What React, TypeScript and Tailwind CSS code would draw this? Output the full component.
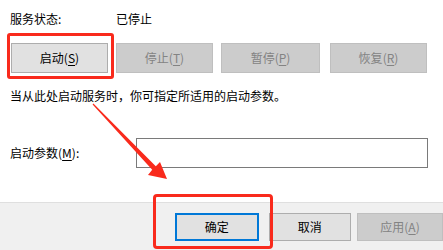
const font = { fontFamily: '"Noto Sans CJK SC", "Microsoft YaHei", sans-serif' };

function Key({ label, k }: { label: string; k: string }) {
  return (
    <>
      {label}(<span className="underline underline-offset-2">{k}</span>)
    </>
  );
}

function TopButton({ children, disabled, className = "" }: { children: React.ReactNode; disabled?: boolean; className?: string }) {
  return (
    <div
      className={
        "flex h-[30px] w-[97px] items-center justify-center border text-[12px] leading-4 " +
        (disabled ? "border-[#bfbfbf] bg-[#cccccc] text-[#838383] " : "border-[#adadad] bg-[#e1e1e1] text-black ") +
        className
      }
    >
      {children}
    </div>
  );
}

export default function App() {
  return (
    <div className="relative h-[250px] w-[443px] overflow-hidden bg-white text-black" style={font}>
      <div className="flex h-[202px] flex-col pl-[10px] pt-[11px]">
        <div className="flex h-4 items-center text-[12px] leading-4">
          <span className="w-[106px]">服务状态:</span>
          <span>已停止</span>
        </div>
        <div className="mt-[16px] flex">
          <TopButton className="ml-[1px]"><Key label="启动" k="S" /></TopButton>
          <TopButton disabled className="ml-[8px]"><Key label="停止" k="T" /></TopButton>
          <TopButton disabled className="ml-[8px] w-[99px]"><Key label="暂停" k="P" /></TopButton>
          <TopButton disabled className="ml-[10px]"><Key label="恢复" k="R" /></TopButton>
        </div>
        <div className="mt-[15px] h-4 text-[12px] leading-4">当从此处启动服务时，你可指定所适用的启动参数。</div>
        <div className="mt-[34px] flex items-center">
          <span className="w-[126px] text-[12px] leading-4">
            <Key label="启动参数" k="M" />:
          </span>
          <div className="h-[30px] w-[292px] border border-[#7a7a7a] bg-white" />
        </div>
      </div>
      <div className="flex h-[48px] border-t border-[#dfdfdf] bg-[#f0f0f0] pl-[175px] pt-[10px]">
        <div className="flex h-[28px] w-[87px] items-center justify-center border-2 border-[#0078d7] bg-[#e1e1e1] text-[12px]">确定</div>
        <div className="ml-[10px] flex h-[28px] w-[86px] items-center justify-center border border-[#adadad] bg-[#e1e1e1] text-[12px]">取消</div>
        <div className="ml-[6px] flex h-[28px] w-[86px] shrink-0 items-center justify-center border border-[#bfbfbf] bg-[#cccccc] text-[12px] text-[#838383]">
          <Key label="应用" k="A" />
        </div>
      </div>

      {/* annotations */}
      <div className="absolute left-[7px] top-[33px] h-[46px] w-[107px] rounded-[3px] border-[3px] border-[#f92a1c]" />
      <div className="absolute left-[153px] top-[194px] h-[55px] w-[120px] rounded-[4px] border-[3px] border-[#f92a1c]" />
      <svg className="absolute left-0 top-0" width="443" height="250" viewBox="0 0 443 250">
        <polygon
          points="93.4,103.6 155.8,166.3 160,162 167,179 148,175 152.2,169.8 92.6,104.4"
          fill="#f92a1c"
        />
      </svg>
    </div>
  );
}
